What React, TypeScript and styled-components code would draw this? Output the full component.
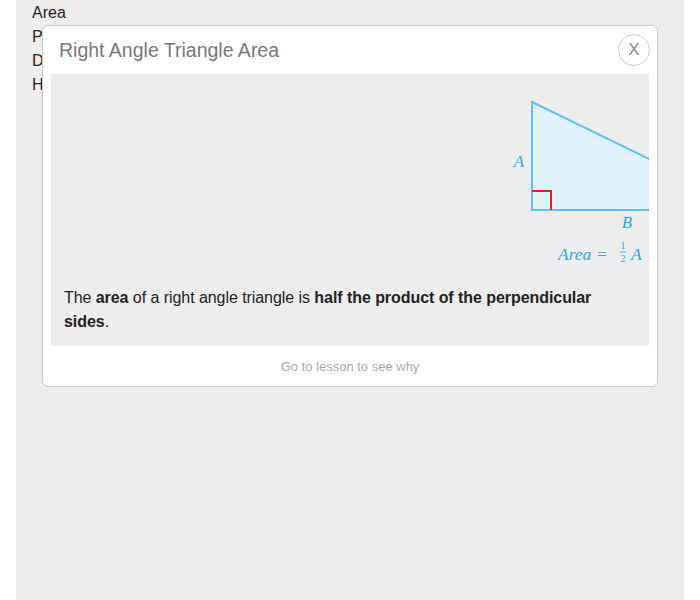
import React from "react";
import styled, { createGlobalStyle } from "styled-components";

const Global = createGlobalStyle`
  html, body { margin: 0; padding: 0; background: #fff; }
  body { font-family: "Liberation Sans", Arial, sans-serif; color: #222; }
`;

const Column = styled.div`
  position: relative;
  margin: 0 16px;
  min-height: 600px;
  background: #ededed;
  padding: 1px 0 0 16px;
  box-sizing: border-box;
`;

const TopicList = styled.ul`
  list-style: none;
  margin: 0;
  padding: 0;
  font-size: 16px;
  line-height: 24px;
  color: #222;
`;

const Topic = styled.li`
  margin: 0;
`;

const Modal = styled.div`
  position: absolute;
  top: 25px;
  left: 26px;
  width: 616px;
  box-sizing: border-box;
  background: #fff;
  border: 1px solid #ccc;
  border-radius: 6px;
  display: flex;
  flex-direction: column;
`;

const Header = styled.div`
  height: 48px;
  display: flex;
  align-items: center;
  justify-content: space-between;
  padding: 0 7px 0 16px;
`;

const Title = styled.h2`
  margin: 0;
  font-size: 19.5px;
  font-weight: normal;
  color: #777;
`;

const Close = styled.button`
  width: 32px;
  height: 32px;
  border-radius: 50%;
  border: 1px solid #ccc;
  background: #fff;
  color: #888;
  font-family: "Liberation Sans", Arial, sans-serif;
  font-size: 17px;
  padding: 0;
  display: flex;
  align-items: center;
  justify-content: center;
  margin-top: -1px;
`;

const Panel = styled.div`
  margin: 0 8px;
  background: #ededed;
  overflow: hidden;
  padding: 10px 13px 12px;
`;

const Figure = styled.div`
  width: 300px;
  height: 190px;
  margin-left: 436px;
`;

const Desc = styled.p`
  margin: 12px 0 0;
  font-size: 16px;
  line-height: 24px;
  letter-spacing: -0.06px;
  color: #222;
`;

const Footer = styled.div`
  height: 40px;
  display: flex;
  align-items: center;
  justify-content: center;
  font-size: 13px;
  color: #aaa;
`;

const Triangle = () => (
  <svg width="300" height="190" viewBox="0 0 300 190">
    <polygon points="32,18 254,126 32,126" fill="#dff2fd" stroke="#5bbff3" strokeWidth="2" />
    <polyline points="32,107 51,107 51,126" fill="none" stroke="#e2231a" strokeWidth="2" />
    <text x="19" y="83" textAnchor="middle" fontFamily="'Liberation Serif', serif" fontStyle="italic" fontSize="17" fill="#29a8e8">A</text>
    <text x="127" y="144" textAnchor="middle" fontFamily="'Liberation Serif', serif" fontStyle="italic" fontSize="17" fill="#29a8e8">B</text>
    <text x="58" y="176" fontFamily="'Liberation Serif', serif" fontStyle="italic" fontSize="17.5" fill="#29a8e8">Area =</text>
    <text x="123" y="165" textAnchor="middle" fontFamily="'Liberation Serif', serif" fontSize="10" fill="#29a8e8">1</text>
    <line x1="119.5" y1="168" x2="126.5" y2="168" stroke="#29a8e8" strokeWidth="0.8" />
    <text x="123" y="178" textAnchor="middle" fontFamily="'Liberation Serif', serif" fontSize="10" fill="#29a8e8">2</text>
    <text x="131" y="176" fontFamily="'Liberation Serif', serif" fontStyle="italic" fontSize="17.5" fill="#29a8e8">A ×  B</text>
  </svg>
);

export default function App() {
  return (
    <>
      <Global />
      <Column>
        <TopicList>
          <Topic>Area</Topic>
          <Topic>Perimeter</Topic>
          <Topic>Diagonal</Topic>
          <Topic>Hypotenuse</Topic>
        </TopicList>
        <Modal>
          <Header>
            <Title>Right Angle Triangle Area</Title>
            <Close>X</Close>
          </Header>
          <Panel>
            <Figure>
              <Triangle />
            </Figure>
            <Desc>
              The <b>area</b> of a right angle triangle is <b>half the product of the perpendicular sides</b>.
            </Desc>
          </Panel>
          <Footer>Go to lesson to see why</Footer>
        </Modal>
      </Column>
    </>
  );
}
